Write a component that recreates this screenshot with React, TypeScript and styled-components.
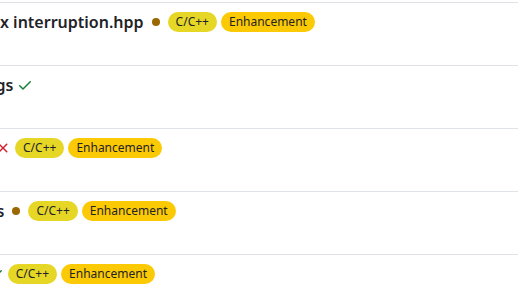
import React from "react";
import styled, { createGlobalStyle } from "styled-components";

const Global = createGlobalStyle`
  html, body { margin: 0; padding: 0; background: #ffffff; overflow: hidden; }
  body { font-family: "Noto Sans", "Open Sans", sans-serif; color: #1f2328; }
`;

const List = styled.div`
  margin-top: 2px;
  display: flex;
  flex-direction: column;
`;

const Row = styled.div`
  border-top: 1px solid #dfe3e7;
  height: 63px;
  padding-top: 8px;
  box-sizing: border-box;
  overflow: hidden;
`;

const Header = styled.div<{ $shift: number }>`
  display: flex;
  align-items: center;
  gap: 4px;
  height: 22px;
  margin-left: ${(p) => p.$shift}px;
  white-space: nowrap;
`;

const Title = styled.span`
  font-size: 16px;
  font-weight: 600;
  line-height: 22px;
  color: #1f2328;
`;

const Status = styled.svg<{ $color: string }>`
  width: 16px;
  height: 16px;
  flex: none;
  fill: ${(p) => p.$color};
`;

const Label = styled.span<{ $bg: string }>`
  display: inline-flex;
  align-items: center;
  height: 20px;
  box-sizing: border-box;
  padding: 0 8px;
  border-radius: 2em;
  background: ${(p) => p.$bg};
  color: #1f2328;
  font-size: 12px;
  font-weight: 400;
  line-height: 18px;
`;

type StatusKind = "pending" | "success" | "failure";

const icons: Record<StatusKind, { color: string; d: string }> = {
  pending: { color: "#9a6700", d: "M8 4a4 4 0 1 1 0 8 4 4 0 0 1 0-8Z" },
  success: {
    color: "#1a7f37",
    d: "M13.78 4.22a.75.75 0 0 1 0 1.06l-7.25 7.25a.75.75 0 0 1-1.06 0L2.22 9.28a.751.751 0 0 1 .018-1.042.751.751 0 0 1 1.042-.018L6 10.94l6.72-6.72a.75.75 0 0 1 1.06 0Z",
  },
  failure: {
    color: "#cf222e",
    d: "M3.72 3.72a.75.75 0 0 1 1.06 0L8 6.94l3.22-3.22a.749.749 0 0 1 1.275.326.749.749 0 0 1-.215.734L9.06 8l3.22 3.22a.749.749 0 0 1-.326 1.275.749.749 0 0 1-.734-.215L8 9.06l-3.22 3.22a.751.751 0 0 1-1.042-.018.751.751 0 0 1-.018-1.042L6.94 8 3.72 4.78a.75.75 0 0 1 0-1.06Z",
  },
};

const LABELS = [
  { name: "C/C++", bg: "#e6d726" },
  { name: "Enhancement", bg: "#fbca04" },
];

type Item = { title: string; shift: number; status: StatusKind; labels: boolean };

const items: Item[] = [
  { title: "x interruption.hpp", shift: 0, status: "pending", labels: true },
  { title: "gs", shift: -4.5, status: "success", labels: false },
  { title: "", shift: -5, status: "failure", labels: true },
  { title: "s", shift: -3.5, status: "pending", labels: true },
  { title: "", shift: -12.3, status: "success", labels: true },
];

export default function App() {
  return (
    <>
      <Global />
      <List>
        {items.map((it, i) => (
          <Row key={i}>
            <Header $shift={it.shift}>
              {it.title && <Title>{it.title}</Title>}
              <Status viewBox="0 0 16 16" $color={icons[it.status].color}>
                <path d={icons[it.status].d} />
              </Status>
              {it.labels &&
                LABELS.map((l) => (
                  <Label key={l.name} $bg={l.bg}>
                    {l.name}
                  </Label>
                ))}
            </Header>
          </Row>
        ))}
      </List>
    </>
  );
}
